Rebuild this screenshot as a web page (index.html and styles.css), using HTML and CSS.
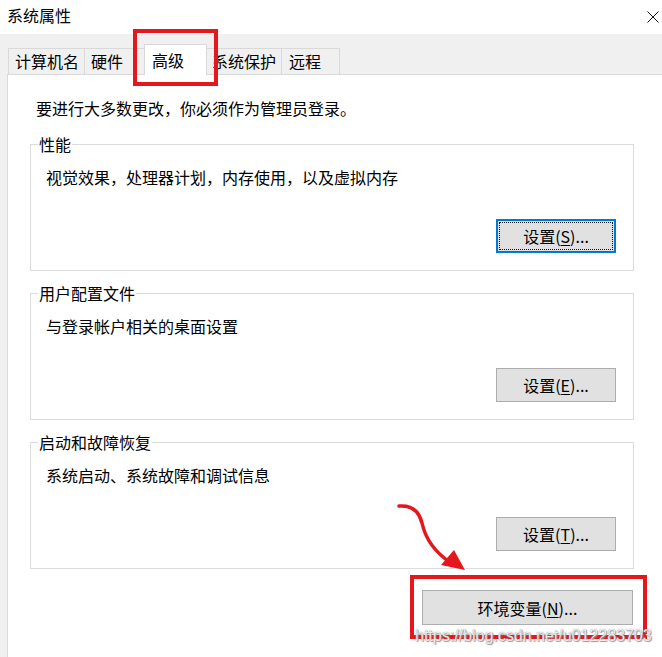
FILE: index.html
```html
<!DOCTYPE html>
<html lang="zh-CN">
  <head>
    <meta charset="UTF-8" />
    <meta name="viewport" content="width=device-width, initial-scale=1.0" />
    <title>系统属性</title>
    <link rel="stylesheet" href="styles.css">
  </head>
  <body>
    <!-- 标题栏 -->
    <div class="titlebar">
      <span class="title">系统属性</span>
      <svg class="close" width="12" height="12" viewBox="0 0 12 12">
        <path d="M0.5 0.5 L11.5 11.5 M11.5 0.5 L0.5 11.5" stroke="#111" stroke-width="1" />
      </svg>
    </div>

    <div class="dialog">
      <!-- 选项卡 -->
      <div class="tabs">
        <div class="tab">计算机名</div>
        <div class="tab short">硬件</div>
        <div class="tab short selected">高级</div>
        <div class="tab">系统保护</div>
        <div class="tab short">远程</div>
      </div>

      <!-- 高级 页面 -->
      <div class="panel">
        <p class="intro">要进行大多数更改，你必须作为管理员登录。</p>

        <fieldset class="group">
          <legend>性能</legend>
          <div class="group-body">
            <p>视觉效果，处理器计划，内存使用，以及虚拟内存</p>
            <div class="group-actions">
              <button class="btn focused">设置(<u>S</u>)...</button>
            </div>
          </div>
        </fieldset>

        <fieldset class="group">
          <legend>用户配置文件</legend>
          <div class="group-body">
            <p>与登录帐户相关的桌面设置</p>
            <div class="group-actions">
              <button class="btn">设置(<u>E</u>)...</button>
            </div>
          </div>
        </fieldset>

        <fieldset class="group">
          <legend>启动和故障恢复</legend>
          <div class="group-body">
            <p>系统启动、系统故障和调试信息</p>
            <div class="group-actions">
              <button class="btn">设置(<u>T</u>)...</button>
            </div>
          </div>
        </fieldset>

        <div class="panel-actions">
          <button class="btn wide">环境变量(<u>N</u>)...</button>
        </div>
      </div>
    </div>

    <!-- 标注 -->
    <div class="mark mark-tab"></div>
    <div class="mark mark-env"></div>
    <svg class="arrow" width="90" height="80" viewBox="0 0 90 80">
      <path d="M2 3 C 14 2, 22 8, 25 20 C 28 34, 36 48, 54 60" fill="none" stroke="#e3171c" stroke-width="3.5" stroke-linecap="round" />
      <path d="M44 62 L 68 67 L 57 47 Z" fill="#e3171c" />
    </svg>
    <div class="watermark">https://blog.csdn.net/u012283703</div>
  </body>
</html>
```

FILE: styles.css
```css
/* 整体 */
body {
  margin: 0;
  height: 657px;
  overflow: hidden;
  background-color: #f0f0f0;
  font-family: "Noto Sans CJK SC", "Microsoft YaHei", sans-serif;
  font-size: 16px;
  color: #000;
  display: flex;
  flex-direction: column;
  position: relative;
}

p {
  margin: 0;
}

/* 标题栏 */
.titlebar {
  height: 34px;
  background-color: #fff;
  display: flex;
  align-items: center;
  justify-content: space-between;
  padding: 0 3px 0 7px;
  flex-shrink: 0;
}

.title {
  font-size: 16px;
  line-height: 20px;
  margin-top: -4px;
}

.dialog {
  flex: 1;
  display: flex;
  flex-direction: column;
  padding-left: 7px;
}

/* 选项卡 */
.tabs {
  display: flex;
  align-items: flex-end;
  height: 29px;
  margin-top: 11px;
  padding-left: 1px;
}

.tab {
  height: 25px;
  line-height: 24px;
  padding: 0 5px 0 6px;
  border: 1px solid #d9d9d9;
  border-bottom: none;
  background-color: #f0f0f0;
  white-space: nowrap;
}

.tab + .tab {
  border-left: none;
}

.tab.short {
  padding-right: 22px;
}

.tab.selected {
  position: relative;
  z-index: 1;
  height: 30px;
  line-height: 30px;
  margin: 0 -2px -1px -2px;
  padding: 0 22px 0 7px;
  border-left: 1px solid #d9d9d9;
  background-color: #fff;
}

.tab.selected + .tab {
  padding-left: 7px;
}

.tab:last-child {
  padding: 0 18px 0 7px;
}

/* 内容页 */
.panel {
  flex: 1;
  background-color: #fff;
  border-top: 1px solid #d9d9d9;
  border-left: 1px solid #d9d9d9;
  padding: 22px 0 0 22px;
}

.intro {
  line-height: 22px;
  padding-left: 6px;
}

.group {
  width: 602px;
  margin: 15px 0 0 0;
  padding: 0;
  border: 1px solid #dcdcdc;
}

.group + .group {
  margin-top: 12px;
}

.group legend {
  margin-left: 7px;
  padding: 0 1px;
  line-height: 20px;
}

.group-body {
  padding: 12px 17px 17px 15px;
}

.group-body p {
  line-height: 22px;
}

.group-actions {
  display: flex;
  justify-content: flex-end;
  margin-top: 31px;
}

/* 按钮 */
.btn {
  width: 120px;
  height: 34px;
  font-family: inherit;
  font-size: 16px;
  color: #000;
  background-color: #e1e1e1;
  border: 1px solid #adadad;
  padding: 0;
}

.btn u {
  text-underline-offset: 2px;
}

.btn.focused {
  border: 2px solid #0078d7;
  outline: 1px dotted #111;
  outline-offset: -4px;
}

.btn.wide {
  width: 211px;
  height: 35px;
}

.panel-actions {
  width: 603px;
  display: flex;
  justify-content: flex-end;
  margin-top: 21px;
}

/* 标注 */
.mark {
  position: absolute;
  border: 4px solid #e3171c;
  box-sizing: border-box;
}

.mark-tab {
  left: 133px;
  top: 29px;
  width: 85px;
  height: 57px;
}

.mark-env {
  left: 410px;
  top: 575px;
  width: 237px;
  height: 64px;
}

.arrow {
  position: absolute;
  left: 397px;
  top: 503px;
}

.watermark {
  position: absolute;
  left: 415px;
  top: 627px;
  font-family: "Liberation Sans", Arial, sans-serif;
  font-size: 16px;
  color: rgba(255, 255, 255, 0.85);
  text-shadow: 0 0 1px #777, 1px 1px 1px #999;
}
```
